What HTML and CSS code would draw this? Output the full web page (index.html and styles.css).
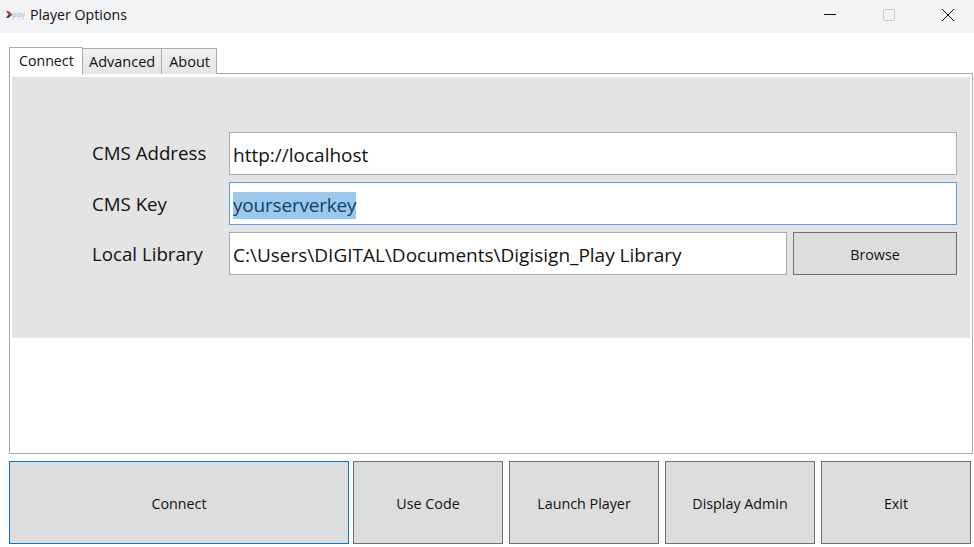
FILE: index.html
```html
<!DOCTYPE html>
<html lang="en">

<head>
	<meta charset="UTF-8">
	<title>Player Options</title>
	<link rel="stylesheet" href="styles.css">
</head>

<body>
	<div class="titlebar">
		<svg class="logo" width="20" height="10" viewBox="0 0 20 10" xmlns="http://www.w3.org/2000/svg">
			<path d="M0 1 L2.5 1 L6.5 4.5 L2.5 4.5 Z" fill="#d0283c" />
			<path d="M0 8 L2.5 8 L6.5 4.5 L2.5 4.5 Z" fill="#34397a" />
			<text x="6.5" y="6.5" class="logo-text">play</text>
		</svg>
		<span class="title">Player Options</span>
		<div class="win-btns">
			<svg class="win-btn" width="14" height="14" viewBox="0 0 14 14" xmlns="http://www.w3.org/2000/svg">
				<path d="M1 6.5 H13" stroke="#111" stroke-width="1" />
			</svg>
			<svg class="win-btn" width="14" height="14" viewBox="0 0 14 14" xmlns="http://www.w3.org/2000/svg">
				<rect x="1.5" y="1.5" width="11" height="11" rx="1" fill="none" stroke="#c6c8ca" stroke-width="1" />
			</svg>
			<svg class="win-btn" width="14" height="14" viewBox="0 0 14 14" xmlns="http://www.w3.org/2000/svg">
				<path d="M1 1 L13 13 M13 1 L1 13" stroke="#111" stroke-width="1" />
			</svg>
		</div>
	</div>

	<div class="content">
		<div class="tabs">
			<div class="tab active">Connect</div>
			<div class="tab">Advanced</div>
			<div class="tab tab-about">About</div>
		</div>

		<div class="tab-page">
			<div class="form">
				<div class="row">
					<label class="row-label label-first">CMS Address</label>
					<div class="field">http://localhost</div>
				</div>
				<div class="row">
					<label class="row-label">CMS Key</label>
					<div class="field focused"><span class="selected">yourserverkey</span></div>
				</div>
				<div class="row">
					<label class="row-label">Local Library</label>
					<div class="field">C:\Users\DIGITAL\Documents\Digisign_Play Library</div>
					<button class="btn browse">Browse</button>
				</div>
			</div>
		</div>

		<div class="actions">
			<button class="btn action-main">Connect</button>
			<button class="btn action">Use Code</button>
			<button class="btn action">Launch Player</button>
			<button class="btn action">Display Admin</button>
			<button class="btn action">Exit</button>
		</div>
	</div>
</body>

</html>
```

FILE: styles.css
```css
html {
	height: 100%;
}

body {
	height: 100%;
	padding: 0;
	margin: 0;
	background: #FFFFFF;
	font-family: 'Open Sans', 'Noto Sans', sans-serif;
	color: #111111;
	overflow: hidden;
}

.titlebar {
	height: 33px;
	box-sizing: border-box;
	display: flex;
	align-items: center;
	background: #F1F3F5;
	padding: 0 0 4px 6px;
}

.logo {
	margin-right: 4px;
}

.logo-text {
	font-size: 6.5px;
	fill: #a9aec8;
}

.title {
	font-size: 14.2px;
}

.win-btns {
	margin-left: auto;
	display: flex;
	gap: 45px;
	padding-right: 19px;
}

.content {
	padding: 13px 1px 0 9px;
}

.tabs {
	display: flex;
	align-items: flex-end;
	height: 28px;
	position: relative;
	z-index: 1;
}

.tab {
	height: 26px;
	line-height: 25px;
	padding: 0 6px;
	font-size: 14.5px;
	background: linear-gradient(#F0F0F0, #E5E5E5);
	border: 1px solid #ACACAC;
	border-bottom: none;
	margin-right: -1px;
	box-sizing: border-box;
}

.tab-about {
	padding: 0 6px 0 7px;
}

.tab.active {
	height: 28px;
	line-height: 25px;
	font-size: 14.2px;
	background: #FFFFFF;
	width: 74px;
	padding: 0 9px;
	border-bottom: 1px solid #FFFFFF;
	margin-bottom: -1px;
}

.tab-page {
	height: 381px;
	box-sizing: border-box;
	border: 1px solid #ACACAC;
	margin-top: -1px;
	padding: 3px 2px;
}

.form {
	height: 261px;
	box-sizing: border-box;
	background: #E4E4E4;
	padding: 55px 13px 0 80px;
	display: flex;
	flex-direction: column;
	gap: 7px;
}

.row {
	display: flex;
	height: 43px;
}

.row-label {
	width: 137px;
	flex: none;
	font-size: 18.7px;
	line-height: 43px;
}

.label-first {
	line-height: 41px;
}

.field {
	flex: 1;
	box-sizing: border-box;
	background: #FFFFFF;
	border: 1px solid #ABADB3;
	font-size: 19px;
	line-height: 44px;
	padding-left: 3px;
	white-space: nowrap;
}

.field.focused {
	border-color: #569DE5;
}

.selected {
	background: #99C9EF;
	color: #17405F;
	display: inline-block;
	line-height: 27px;
	letter-spacing: -0.2px;
}

.btn {
	box-sizing: border-box;
	background: #DDDDDD;
	border: 1px solid #707070;
	font-family: inherit;
	font-size: 14.3px;
	line-height: 20px;
	color: #111111;
	padding: 2px 0 0;
}

.browse {
	width: 164px;
	flex: none;
	margin-left: 6px;
}

.actions {
	display: flex;
	gap: 6px;
	margin-top: 7px;
	height: 83px;
}

.action {
	width: 150px;
	flex: none;
}

.action-main {
	width: 340px;
	flex: none;
	margin-right: -2px;
	border-color: #0078D7;
}
```
